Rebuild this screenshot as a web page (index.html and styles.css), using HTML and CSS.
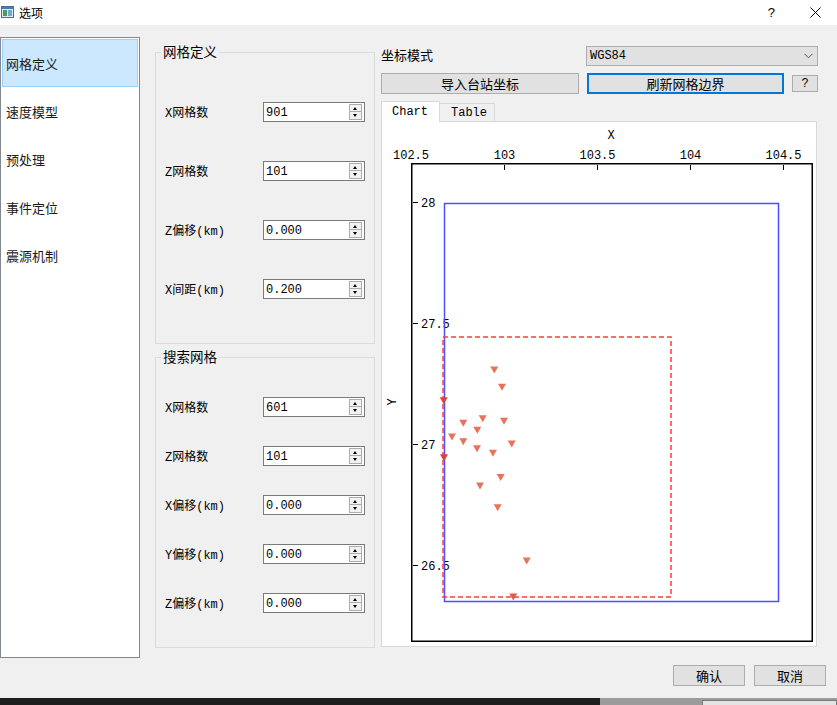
FILE: index.html
```html
<!DOCTYPE html>
<html lang="zh">
<head>
<meta charset="utf-8">
<title>选项</title>
<link rel="stylesheet" href="styles.css">
</head>
<body>
<div class="window">
  <div class="titlebar">
    <svg class="app-icon" width="13" height="12" viewBox="0 0 13 12">
      <rect x="0.5" y="0.5" width="12" height="11" fill="#dfe9f3" stroke="#5a6c80"/>
      <rect x="1" y="1" width="11" height="2" fill="#3d7cc9"/>
      <rect x="2" y="4" width="4" height="6" fill="#4f9a5a"/>
      <rect x="7" y="4" width="4" height="6" fill="#6aa9de"/>
    </svg>
    <span class="title">选项</span>
    <span class="tb-help">?</span>
    <svg class="tb-close" width="11" height="11" viewBox="0 0 11 11">
      <path d="M0.5 0.5 L10.5 10.5 M10.5 0.5 L0.5 10.5" stroke="#000" stroke-width="1" fill="none"/>
    </svg>
  </div>

  <div class="main">
    <ul class="nav">
      <li class="nav-item selected">网格定义</li>
      <li class="nav-item">速度模型</li>
      <li class="nav-item">预处理</li>
      <li class="nav-item">事件定位</li>
      <li class="nav-item">震源机制</li>
    </ul>

    <div class="middle">
      <div class="group group-grid">
        <div class="group-title">网格定义</div>
        <div class="row"><span class="lbl">X网格数</span><div class="spin"><span class="val">901</span><span class="arrows"><span class="arr up"></span><span class="arr dn"></span></span></div></div>
        <div class="row"><span class="lbl">Z网格数</span><div class="spin"><span class="val">101</span><span class="arrows"><span class="arr up"></span><span class="arr dn"></span></span></div></div>
        <div class="row"><span class="lbl">Z偏移(km)</span><div class="spin"><span class="val">0.000</span><span class="arrows"><span class="arr up"></span><span class="arr dn"></span></span></div></div>
        <div class="row"><span class="lbl">X间距(km)</span><div class="spin"><span class="val">0.200</span><span class="arrows"><span class="arr up"></span><span class="arr dn"></span></span></div></div>
      </div>

      <div class="group group-search">
        <div class="group-title">搜索网格</div>
        <div class="row"><span class="lbl">X网格数</span><div class="spin"><span class="val">601</span><span class="arrows"><span class="arr up"></span><span class="arr dn"></span></span></div></div>
        <div class="row"><span class="lbl">Z网格数</span><div class="spin"><span class="val">101</span><span class="arrows"><span class="arr up"></span><span class="arr dn"></span></span></div></div>
        <div class="row"><span class="lbl">X偏移(km)</span><div class="spin"><span class="val">0.000</span><span class="arrows"><span class="arr up"></span><span class="arr dn"></span></span></div></div>
        <div class="row"><span class="lbl">Y偏移(km)</span><div class="spin"><span class="val">0.000</span><span class="arrows"><span class="arr up"></span><span class="arr dn"></span></span></div></div>
        <div class="row"><span class="lbl">Z偏移(km)</span><div class="spin"><span class="val">0.000</span><span class="arrows"><span class="arr up"></span><span class="arr dn"></span></span></div></div>
      </div>
    </div>

    <div class="right">
      <div class="coord-row">
        <span class="coord-lbl">坐标模式</span>
        <div class="combo">
          <span class="combo-val">WGS84</span>
          <svg class="chev" width="9" height="6" viewBox="0 0 9 6"><path d="M0.5 0.8 L4.5 4.8 L8.5 0.8" stroke="#555" stroke-width="1" fill="none"/></svg>
        </div>
      </div>
      <div class="btn-row">
        <button class="btn btn-import">导入台站坐标</button>
        <button class="btn btn-refresh">刷新网格边界</button>
        <button class="btn btn-q">?</button>
      </div>
      <div class="tabs">
        <div class="tab active">Chart</div>
        <div class="tab">Table</div>
      </div>
      <div class="pane">
        <svg class="chart" width="434" height="524" viewBox="0 0 434 524">
          <g transform="translate(-1,-1)">
            <text class="ax-title" x="230" y="18" text-anchor="middle">X</text>
            <g class="xlabels" text-anchor="middle">
              <text x="30" y="38">102.5</text>
              <text x="123.5" y="38">103</text>
              <text x="216.5" y="38">103.5</text>
              <text x="309.5" y="38">104</text>
              <text x="402.5" y="38">104.5</text>
            </g>
            <rect x="30.75" y="42.75" width="400.5" height="477.5" fill="none" stroke="#000" stroke-width="1.5"/>
            <g stroke="#000" stroke-width="1">
              <line x1="123.5" y1="44" x2="123.5" y2="49"/>
              <line x1="216.5" y1="44" x2="216.5" y2="49"/>
              <line x1="309.5" y1="44" x2="309.5" y2="49"/>
              <line x1="402.5" y1="44" x2="402.5" y2="49"/>
              <line x1="32" y1="81.5" x2="37" y2="81.5"/>
              <line x1="32" y1="202.5" x2="37" y2="202.5"/>
              <line x1="32" y1="323.5" x2="37" y2="323.5"/>
              <line x1="32" y1="444.5" x2="37" y2="444.5"/>
            </g>
            <g class="ylabels">
              <text x="40" y="86">28</text>
              <text x="40" y="207">27.5</text>
              <text x="40" y="328">27</text>
              <text x="40" y="449">26.5</text>
            </g>
            <text class="ax-title" x="15" y="281" text-anchor="middle" transform="rotate(-90 15 281)">Y</text>
            <rect x="63.5" y="82.5" width="334" height="398" fill="none" stroke="#4f4fff" stroke-width="1.5"/>
            <rect x="62" y="216" width="228" height="260" fill="none" stroke="#ff3c3c" stroke-width="1.5" stroke-dasharray="5 3"/>
            <g fill="#e8735c">
              <path d="M109.3 245.5 h8 l-4 7 z"/>
              <path d="M117 262.8 h8 l-4 7 z"/>
              <path d="M58.7 276.2 h8 l-4 7 z" fill="#d8443c"/>
              <path d="M97.7 294.2 h8 l-4 7 z"/>
              <path d="M119 296.8 h8 l-4 7 z"/>
              <path d="M78.3 298.8 h8 l-4 7 z"/>
              <path d="M92.3 305.8 h8 l-4 7 z"/>
              <path d="M67 312.5 h8 l-4 7 z"/>
              <path d="M78.3 317.2 h8 l-4 7 z"/>
              <path d="M126.7 319.5 h8 l-4 7 z"/>
              <path d="M92 324.2 h8 l-4 7 z"/>
              <path d="M108 328.8 h8 l-4 7 z"/>
              <path d="M59 333.2 h8 l-4 7 z" fill="#d8443c"/>
              <path d="M115.7 353 h8 l-4 7 z"/>
              <path d="M95 361.5 h8 l-4 7 z"/>
              <path d="M112.7 383.2 h8 l-4 7 z"/>
              <path d="M141.7 436.5 h8 l-4 7 z"/>
              <path d="M128.3 472.5 h8 l-4 7 z" fill="#e25a48"/>
            </g>
          </g>
        </svg>
      </div>
    </div>
  </div>

  <div class="footer">
    <button class="btn btn-foot">确认</button>
    <button class="btn btn-foot">取消</button>
  </div>

  <div class="taskbar">
    <div class="tb-dark"></div>
    <div class="tb-gray"><div class="tb-box"></div></div>
  </div>
</div>
</body>
</html>
```

FILE: styles.css
```css
* { box-sizing: border-box; }

html, body {
  margin: 0;
  padding: 0;
}

body {
  width: 837px;
  height: 705px;
  overflow: hidden;
  background: #f0f0f0;
  font-family: "Liberation Mono", "Noto Sans CJK SC", monospace;
  font-size: 12px;
  color: #000;
}

.window {
  width: 837px;
  height: 705px;
  display: flex;
  flex-direction: column;
}

/* title bar */
.titlebar {
  height: 25px;
  background: #fff;
  display: flex;
  align-items: center;
  flex: none;
}

.app-icon {
  margin-left: 1px;
  margin-top: -2px;
}

.title {
  margin-left: 5px;
  font-family: "Noto Sans CJK SC", sans-serif;
  font-size: 12px;
  line-height: 14px;
}

.tb-help {
  margin-left: auto;
  font-family: "Liberation Sans", sans-serif;
  font-size: 13px;
  line-height: 14px;
  margin-right: 35px;
}

.tb-close {
  margin-right: 16px;
}

/* main area */
.main {
  display: flex;
  height: 633px;
  flex: none;
}

.nav {
  list-style: none;
  margin: 12px 0 0 0;
  padding: 1px;
  width: 140px;
  height: 621px;
  background: #fff;
  border: 1px solid #828790;
  font-family: "Noto Sans CJK SC", sans-serif;
  font-size: 13px;
  color: #1a1a1a;
}

.nav-item {
  height: 48px;
  display: flex;
  align-items: center;
  padding-left: 3px;
  border: 1px solid transparent;
}

.nav-item.selected {
  background: #cce8ff;
  border-color: #99d1ff;
}

/* middle column */
.middle {
  margin-left: 15px;
  width: 220px;
  display: flex;
  flex-direction: column;
}

.group {
  position: relative;
  border: 1px solid #dcdcdc;
  display: flex;
  flex-direction: column;
  padding-left: 9px;
}

.group-grid {
  margin-top: 27px;
  height: 292px;
  padding-top: 49px;
  gap: 39px;
}

.group-search {
  margin-top: 13px;
  height: 291px;
  padding-top: 39px;
  gap: 29px;
}

.group-title {
  position: absolute;
  top: -12px;
  left: 5px;
  padding: 0 2px;
  background: #f0f0f0;
  font-family: "Noto Sans CJK SC", sans-serif;
  font-size: 13.5px;
  line-height: 20px;
}

.row {
  display: flex;
  align-items: center;
  height: 20px;
}

.lbl {
  width: 98px;
  font-size: 12px;
}

.spin {
  width: 102px;
  height: 20px;
  border: 1px solid #7a7a7a;
  background: #fff;
  display: flex;
  align-items: center;
}

.val {
  padding-left: 2px;
  padding-top: 1px;
  font-size: 12px;
  line-height: 18px;
}

.arrows {
  margin-left: auto;
  margin-right: 2px;
  width: 13px;
  height: 16px;
  display: flex;
  flex-direction: column;
}

.arr {
  position: relative;
  height: 8px;
  border: 1px solid #adadad;
  background: #f2f2f2;
}

.arr.dn { border-top: none; }

.arr::after {
  content: "";
  position: absolute;
  left: 3px;
  width: 0;
  height: 0;
  border-left: 2.5px solid transparent;
  border-right: 2.5px solid transparent;
}

.arr.up::after {
  top: 1.5px;
  border-bottom: 3px solid #000;
}

.arr.dn::after {
  top: 1.5px;
  border-top: 3px solid #000;
}

/* right column */
.right {
  margin-left: 6px;
  width: 437px;
  display: flex;
  flex-direction: column;
}

.coord-row {
  margin-top: 21px;
  height: 20px;
  display: flex;
  align-items: center;
}

.coord-lbl {
  font-family: "Noto Sans CJK SC", sans-serif;
  font-size: 13px;
  line-height: 16px;
  margin-top: -3px;
}

.combo {
  margin-left: auto;
  width: 232px;
  height: 20px;
  border: 1px solid #adadad;
  background: #e1e1e1;
  display: flex;
  align-items: center;
  padding-left: 3px;
}

.combo-val {
  font-size: 12px;
}

.chev {
  margin-left: auto;
  margin-right: 4px;
}

.btn-row {
  margin-top: 7px;
  display: flex;
  align-items: center;
  gap: 8px;
  height: 21px;
}

.btn {
  margin: 0;
  padding: 0;
  background: #e1e1e1;
  border: 1px solid #adadad;
  font-family: "Noto Sans CJK SC", sans-serif;
  font-size: 13px;
  color: #000;
  line-height: 1;
}

.btn-import {
  width: 198px;
  height: 21px;
}

.btn-refresh {
  width: 197px;
  height: 21px;
  border: 2px solid #0078d7;
}

.btn-q {
  width: 26px;
  height: 17px;
  font-family: "Liberation Mono", monospace;
  font-size: 12px;
}

.tabs {
  margin-top: 7px;
  height: 20px;
  display: flex;
  align-items: flex-end;
  position: relative;
  z-index: 1;
}

.tab {
  height: 18px;
  width: 55px;
  border: 1px solid #d9d9d9;
  border-left: none;
  border-bottom: none;
  background: #f0f0f0;
  font-size: 12px;
  display: flex;
  align-items: center;
  padding-left: 11px;
}

.tab.active {
  height: 21px;
  width: 59px;
  margin-bottom: -1px;
  border-left: 1px solid #d9d9d9;
  background: #fff;
  padding-left: 10px;
}

.pane {
  width: 436px;
  height: 526px;
  border: 1px solid #d9d9d9;
  background: #fff;
}

.chart {
  display: block;
}

.chart text {
  font-family: "Liberation Mono", monospace;
  font-size: 12px;
  fill: #000;
}

.chart .ax-title {
  font-size: 12px;
}

/* footer */
.footer {
  display: flex;
  justify-content: flex-end;
  gap: 9px;
  padding-top: 7px;
  padding-right: 11px;
  height: 40px;
  flex: none;
}

.btn-foot {
  width: 72px;
  height: 21px;
}

/* bottom strip */
.taskbar {
  margin-top: auto;
  height: 7px;
  display: flex;
  flex: none;
}

.tb-dark {
  width: 600px;
  background: #1e1e1e;
}

.tb-gray {
  flex: 1;
  background: #9c9c9c;
  padding-left: 102px;
  padding-top: 2px;
}

.tb-box {
  height: 5px;
  border: 1px solid #7a7a7a;
  border-bottom: none;
  background: #e4e4e4;
}
```
